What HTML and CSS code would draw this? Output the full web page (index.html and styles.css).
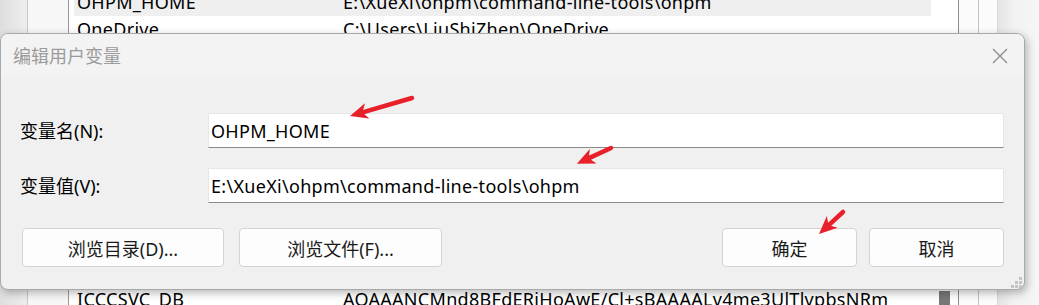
FILE: index.html
```html
<!DOCTYPE html>
<html lang="zh-CN">

<head>
    <meta charset="UTF-8">
    <meta name="viewport" content="width=device-width, initial-scale=1.0">
    <title>编辑用户变量</title>
    <link rel="stylesheet" href="styles.css">
</head>

<body>
    <div class="desk">
        <div class="desk_edge"></div>
        <div class="desk_pane"></div>
        <div class="var_list">
            <div class="var_row selected"><span class="var_name">OHPM_HOME</span><span>E:\XueXi\ohpm\command-line-tools\ohpm</span></div>
            <div class="var_row"><span class="var_name">OneDrive</span><span>C:\Users\LiuShiZhen\OneDrive</span></div>
            <div class="var_row"></div>
            <div class="var_row"></div>
            <div class="var_row"></div>
            <div class="var_row"></div>
            <div class="var_row"></div>
            <div class="var_row"></div>
            <div class="var_row"></div>
            <div class="var_row"></div>
            <div class="var_row"></div>
            <div class="var_row"><span class="var_name">ICCCSVC_DB</span><span>AQAAANCMnd8BFdERjHoAwE/Cl+sBAAAALv4me3UlTlvpbsNRm</span></div>
        </div>
        <div class="desk_scroll"><div class="scroll_thumb"></div></div>
        <div class="desk_col"></div>
        <div class="desk_col narrow"></div>
        <div class="desk_shade"></div>
    </div>

    <div class="dialog">
        <div class="dialog_title">
            <span>编辑用户变量</span>
            <svg class="close_icon" width="16" height="16" viewBox="0 0 16 16">
                <path d="M1 1 L15 15 M15 1 L1 15" stroke="#8a8a8a" stroke-width="1.3" fill="none" />
            </svg>
        </div>
        <div class="dialog_body">
            <div class="field_grid">
                <label class="field_label" for="var_name">变量名(N):</label>
                <input class="field_input" id="var_name" type="text" value="OHPM_HOME">
                <label class="field_label" for="var_value">变量值(V):</label>
                <input class="field_input" id="var_value" type="text" value="E:\XueXi\ohpm\command-line-tools\ohpm">
            </div>
            <div class="button_row">
                <div class="button_group">
                    <button class="dlg_button wide">浏览目录(D)...</button>
                    <button class="dlg_button wide">浏览文件(F)...</button>
                </div>
                <div class="button_group right">
                    <button class="dlg_button">确定</button>
                    <button class="dlg_button">取消</button>
                </div>
            </div>
        </div>
        <svg class="grip" width="11" height="11" viewBox="0 0 11 11">
            <rect x="8" y="0" width="3" height="3" fill="#c4c4c4" />
            <rect x="4" y="4" width="3" height="3" fill="#c4c4c4" />
            <rect x="8" y="4" width="3" height="3" fill="#c4c4c4" />
            <rect x="0" y="8" width="3" height="3" fill="#c4c4c4" />
            <rect x="4" y="8" width="3" height="3" fill="#c4c4c4" />
            <rect x="8" y="8" width="3" height="3" fill="#c4c4c4" />
        </svg>
    </div>

    <!-- red hand-drawn arrows on top of the screenshot -->
    <svg class="marks" width="1039" height="305" viewBox="0 0 1039 305">
        <defs>
            <marker id="head" markerUnits="userSpaceOnUse" viewBox="0 0 18 16" markerWidth="18" markerHeight="16"
                refX="4" refY="8" orient="auto">
                <path d="M0 0 L18 8 L0 16 L5 8 Z" fill="#e8202a" />
            </marker>
        </defs>
        <line x1="412" y1="98" x2="363.4" y2="112.1" stroke="#e8202a" stroke-width="4.5" stroke-linecap="round" marker-end="url(#head)" />
        <line x1="611" y1="148" x2="589.6" y2="157.9" stroke="#e8202a" stroke-width="4.5" stroke-linecap="round" marker-end="url(#head)" />
        <line x1="843" y1="212" x2="829.3" y2="224.6" stroke="#e8202a" stroke-width="4.5" stroke-linecap="round" marker-end="url(#head)" />
    </svg>
</body>

</html>
```

FILE: styles.css
```css
body,
html {
    margin: 0;
    width: 1039px;
    height: 305px;
    overflow: hidden;
    font-family: "Noto Sans", "Noto Sans CJK SC", sans-serif;
    background-color: #f0f0f0;
}

body {
    position: relative;
}

/* window behind the dialog */
.desk {
    display: flex;
    height: 305px;
}

.desk_edge {
    width: 27px;
    border-right: 1px solid #c9c9c9;
    background: linear-gradient(to right, #dedede, #eeeeee);
}

.desk_pane {
    width: 40px;
    border-right: 1px solid #9a9a9a;
    background-color: #f7f7f7;
}

.var_list {
    width: 857px;
    padding-left: 5px;
    background-color: #ffffff;
    margin-top: -11px;
}

.var_row {
    display: flex;
    height: 27px;
    line-height: 27px;
    padding-left: 3px;
    font-size: 18px;
    letter-spacing: 0.3px;
    color: #000000;
    white-space: nowrap;
}

.var_row.selected {
    background-color: #efefef;
}

.var_name {
    width: 266px;
    flex: none;
}

.desk_scroll {
    width: 27px;
    border-right: 1px solid #8c8c8c;
    background-color: #ffffff;
    display: flex;
    flex-direction: column;
    justify-content: flex-end;
}

.scroll_thumb {
    width: 11px;
    height: 14px;
    margin-left: 8px;
    background-color: #777777;
}

.desk_col {
    width: 19px;
    border-right: 1px solid #c4c4c4;
    background-color: #fbfbfb;
}

.desk_col.narrow {
    width: 18px;
    border-right-color: #d8d8d8;
}

.desk_shade {
    flex: 1;
    background: linear-gradient(to right, #e4e4e4, #f2f2f2 40%, #f6f6f6);
}

/* dialog */
.dialog {
    position: absolute;
    left: 0;
    top: 33px;
    width: 1025px;
    height: 257px;
    box-sizing: border-box;
    border: 1px solid #a9a9a9;
    border-radius: 8px;
    background-color: #f0f0f0;
    box-shadow: 2px 3px 9px rgba(0, 0, 0, 0.28);
    overflow: hidden;
}

.dialog_title {
    height: 43px;
    display: flex;
    align-items: center;
    justify-content: space-between;
    padding: 0 16px 0 12px;
    background-color: #f3f3f3;
    font-size: 18px;
    line-height: 24px;
    color: #9b9b9b;
}

.dialog_body {
    padding: 36px 20px 0 19px;
}

.field_grid {
    display: grid;
    grid-template-columns: 188px 1fr;
    row-gap: 20px;
    align-items: center;
}

.field_label {
    font-size: 18px;
    line-height: 24px;
    color: #000000;
}

.field_input {
    height: 35px;
    box-sizing: border-box;
    margin: 0;
    padding: 0 0 0 2px;
    border: 1px solid #e6e6e6;
    border-bottom-color: #8a8a8a;
    background-color: #ffffff;
    font-family: "Noto Sans", "Noto Sans CJK SC", sans-serif;
    font-size: 18px;
    letter-spacing: 0.3px;
    color: #000000;
    outline: none;
}

.button_row {
    display: flex;
    justify-content: space-between;
    margin-top: 25px;
    padding-left: 2px;
}

.button_group {
    display: flex;
    gap: 15px;
}

.button_group.right {
    gap: 12px;
}

.dlg_button {
    width: 135px;
    height: 39px;
    box-sizing: border-box;
    border: 1px solid #d3d3d3;
    border-radius: 4px;
    background-color: #fdfdfd;
    font-family: "Noto Sans", "Noto Sans CJK SC", sans-serif;
    font-size: 18px;
    color: #1a1a1a;
    padding: 0;
}

.dlg_button.wide {
    width: 202px;
}

.dlg_button.wide + .dlg_button.wide {
    width: 203px;
}

.grip {
    position: absolute;
    right: 2px;
    bottom: 1px;
}

.marks {
    position: absolute;
    left: 0;
    top: 0;
    pointer-events: none;
}
```
